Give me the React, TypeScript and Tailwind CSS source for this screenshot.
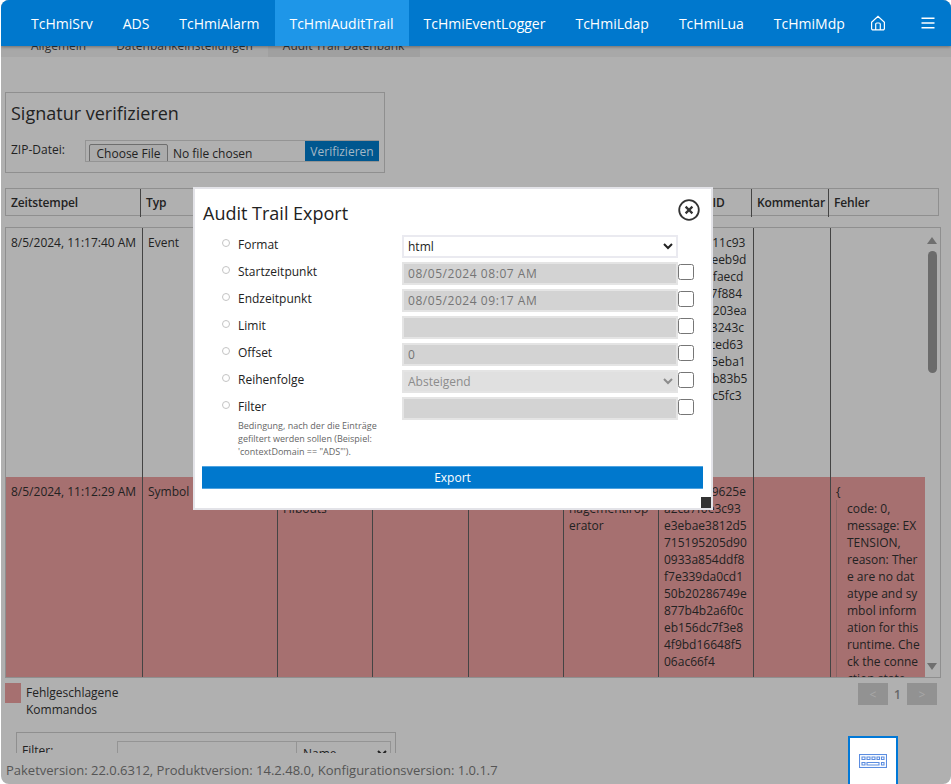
import React from 'react';

const navItems = [
  { label: 'TcHmiSrv' },
  { label: 'ADS' },
  { label: 'TcHmiAlarm' },
  { label: 'TcHmiAuditTrail', active: true },
  { label: 'TcHmiEventLogger' },
  { label: 'TcHmiLdap' },
  { label: 'TcHmiLua' },
  { label: 'TcHmiMdp' },
];

const headerCols = ['Zeitstempel', 'Typ', 'Domäne', 'Name', 'Wert', 'Benutzer', 'Signatur ID', 'Kommentar', 'Fehler'];

const firstRowHash = [
  'a07e3b211c93',
  'c19d420eeb9d',
  '5b8e17dfaecd',
  'e44c0a97f884',
  '7d2ab96203ea',
  '90ce6153243c',
  'b1f738aced63',
  '24a6d8c5eba1',
  'd30e74ab83b5',
  '68b1ee2c5fc3',
];

const secondRowHash = [
  '4cd7e2b9625e',
  'a2ca7f0e3c93',
  'e3ebae3812d5',
  '715195205d90',
  '0933a854ddf8',
  'f7e339da0cd1',
  '50b20286749e',
  '877b4b2a6f0c',
  'eb156dc7f3e8',
  '4f9bd16648f5',
  '06ac66f4',
];

const errorLines = [
  'code: 0,',
  'message: EX',
  'TENSION,',
  'reason: Ther',
  'e are no dat',
  'atype and sy',
  'mbol inform',
  'ation for this',
  'runtime. Che',
  'ck the conne',
  'ction state',
];

function Lines({ lines }: { lines: string[] }) {
  return (
    <>
      {lines.map((line) => (
        <div key={line} className="whitespace-nowrap">
          {line}
        </div>
      ))}
    </>
  );
}

function Cell({ children, first }: { children?: React.ReactNode; first?: boolean }) {
  return (
    <div className={`pl-[5px] pt-[6px] overflow-hidden ${first ? '' : 'border-l border-[#444]'}`}>{children}</div>
  );
}

function ExportRow({ label, noCheck, children }: { label: string; noCheck?: boolean; children: React.ReactNode }) {
  return (
    <div className="flex h-[27px]">
      <div className="w-[35px] pl-[19px] pt-[4px] shrink-0">
        <div className="w-[8px] h-[8px] rounded-full border border-[#c4c4c4]" />
      </div>
      <div className="w-[164px] shrink-0 text-[12px] leading-[18px] pt-[1px] text-[#222]">{label}</div>
      <div className="w-[276px] shrink-0">{children}</div>
      {!noCheck && <input type="checkbox" className="w-[16px] h-[16px] mt-[2px]" />}
    </div>
  );
}

const disabledInput =
  'block w-full h-[23px] px-[4px] text-[12px] tracking-[0.55px] bg-[#d3d3d3] border-2 border-[#e4e4e4] text-[#757575]';

function ExportModal() {
  return (
    <div className="absolute left-[193px] top-[187px] w-[520px] h-[323px] bg-white border-2 border-[#e3e3e8] z-20">
      <div className="pl-[8px] pr-[8px] pt-[12px]">
        <div className="flex justify-between items-start h-[34px]">
          <h2 className="text-[18px] leading-[25px] text-[#222]">Audit Trail Export</h2>
          <svg width="22" height="22" viewBox="0 0 22 22" className="mt-[-2px] mr-[3px]" fill="none">
            <circle cx="11" cy="11" r="9.8" stroke="#333" strokeWidth="1.8" />
            <path d="M7.6 7.6l6.8 6.8M14.4 7.6l-6.8 6.8" stroke="#333" strokeWidth="2.2" />
          </svg>
        </div>
        <ExportRow label="Format" noCheck>
          <select className="block w-full h-[23px] text-[12px] bg-white border-2 border-[#eaeaf0] text-[#222]">
            <option>html</option>
          </select>
        </ExportRow>
        <ExportRow label="Startzeitpunkt">
          <input disabled defaultValue="08/05/2024 08:07 AM" className={disabledInput} />
        </ExportRow>
        <ExportRow label="Endzeitpunkt">
          <input disabled defaultValue="08/05/2024 09:17 AM" className={disabledInput} />
        </ExportRow>
        <ExportRow label="Limit">
          <input disabled className={disabledInput} />
        </ExportRow>
        <ExportRow label="Offset">
          <input disabled defaultValue="0" className={disabledInput} />
        </ExportRow>
        <ExportRow label="Reihenfolge">
          <select
            disabled
            className="block w-full h-[23px] text-[12px] bg-[#e0e0e0] border-2 border-[#e4e4e4] text-[#8c8c8c] opacity-100"
          >
            <option>Absteigend</option>
          </select>
        </ExportRow>
        <ExportRow label="Filter">
          <input disabled className={disabledInput} />
        </ExportRow>
        <p className="ml-[35px] mt-[-5px] w-[150px] text-[9px] leading-[13px] text-[#666]">
          Bedingung, nach der die Einträge gefiltert werden sollen (Beispiel: 'contextDomain == "ADS"').
        </p>
        <button className="block mt-[8px] ml-[-1px] w-[501px] h-[23px] pt-[1px] bg-[#0078cd] border-y border-[#4fa3e0] text-white text-[12px] text-center">
          Export
        </button>
      </div>
      <div className="absolute right-0 bottom-0 w-[10px] h-[11px] bg-[#333]" />
    </div>
  );
}

export default function App() {
  return (
    <div className="relative w-[951px] h-[784px] overflow-hidden bg-white font-['Open_Sans',sans-serif]">
      <div className="flex flex-col h-full ml-[1px] rounded-[8px] overflow-hidden bg-[#b0b0b0] text-[#222]">
        <header className="relative z-10 h-[46px] shrink-0 flex items-stretch bg-[#0078cd] pl-[15px] shadow-[0_1px_3px_rgba(0,0,0,0.35)] text-white text-[14px]">
          {navItems.map((item) => (
            <div
              key={item.label}
              className={`flex items-center ${item.active ? 'ml-[1px] mr-[-1px] pl-[14px] pr-[16px] bg-[#1e96e8]' : 'px-[15px]'}`}
            >
              {item.label}
            </div>
          ))}
          <div className="flex items-center pl-[10px]">
            <svg width="16" height="16" viewBox="0 0 16 16" fill="none" stroke="white" strokeWidth="1.2">
              <path d="M1.6 7.2L8 1.3l6.4 5.9v6.3a1.4 1.4 0 0 1-1.4 1.4H3a1.4 1.4 0 0 1-1.4-1.4z" />
              <path d="M5.7 14.9V9.2a1.2 1.2 0 0 1 1.2-1.2h2.2a1.2 1.2 0 0 1 1.2 1.2v5.7" />
            </svg>
          </div>
          <div className="flex items-center pl-[35px] pb-[1px]">
            <svg width="14" height="12" viewBox="0 0 14 12" stroke="white" strokeWidth="1.4">
              <path d="M0.5 1.2h13M0.5 6h13M0.5 10.8h13" />
            </svg>
          </div>
        </header>

        <div className="mt-[-9px] h-[20px] shrink-0 flex items-end bg-[#a8a8a8] text-[12px] text-[#333]">
          <div className="ml-[30px] pb-[2px]">Allgemein</div>
          <div className="ml-[30px] pb-[2px]">Datenbankeinstellungen</div>
          <div className="ml-[15px] pl-[15px] pr-[16px] pb-[2px] bg-[#a0a0a0]">Audit Trail Datenbank</div>
        </div>

        <main className="flex-1 min-h-0 overflow-hidden pl-[4px] pr-[10px] text-[12px]">
          <section className="mt-[35px] w-[380px] h-[81px] border border-[#8f8f8f] pl-[5px]">
            <h1 className="mt-[8px] text-[18px] leading-[25px] text-[#222]">Signatur verifizieren</h1>
            <div className="flex mt-[14px]">
              <div className="w-[74px] text-[12px] leading-[17px] pt-[1px]">ZIP-Datei:</div>
              <div className="flex w-[294px] h-[22px] border border-[#949494] border-r-0 pl-[3px] pt-[3px] overflow-hidden">
                <div className="shrink-0 w-[79px] h-[20px] border border-[#6e6e6e] rounded-t-[2px] bg-[#ababab] text-[12px] leading-[18px] text-center whitespace-nowrap text-[#222]">
                  Choose File
                </div>
                <div className="shrink-0 ml-[5px] text-[12px] leading-[20px] w-[132px] whitespace-nowrap">No file chosen</div>
                <div className="shrink-0 mt-[-4px] w-[74px] h-[22px] bg-[#00578f] text-[#a4b8c6] text-[12px] leading-[24px] text-center">
                  Verifizieren
                </div>
              </div>
            </div>
          </section>

          <div className="mt-[15px] w-[934px] h-[28px] border border-[#8f8f8f] grid grid-cols-[134px_135px_95px_96px_95px_95px_95px_77px_110px] font-semibold tracking-[-0.15px] leading-[28px]">
            {headerCols.map((col, i) => (
              <div key={col} className={`pl-[5px] whitespace-nowrap ${i === 0 ? '' : 'border-l border-[#444]'}`}>
                {col}
              </div>
            ))}
          </div>

          <div className="mt-[11px] relative w-[936px] h-[451px] border border-[#8f8f8f] overflow-hidden leading-[17px]">
            <div className="w-[919px] h-[249px] grid grid-cols-[136px_135px_95px_96px_95px_95px_95px_77px_95px]">
              <Cell first>8/5/2024, 11:17:40 AM</Cell>
              <Cell>Event</Cell>
              <Cell />
              <Cell />
              <Cell />
              <Cell />
              <Cell>
                <Lines lines={firstRowHash} />
              </Cell>
              <Cell />
              <Cell />
            </div>
            <div className="w-[919px] h-[202px] grid grid-cols-[136px_135px_95px_96px_95px_95px_95px_77px_95px] bg-[#a67070]">
              <Cell first>8/5/2024, 11:12:29 AM</Cell>
              <Cell>Symbol</Cell>
              <Cell>
                <Lines lines={['TcHmi', 'Hibouts']} />
              </Cell>
              <Cell />
              <Cell />
              <Cell>
                <Lines lines={['Benutzer', 'nagementirop', 'erator']} />
              </Cell>
              <Cell>
                <Lines lines={secondRowHash} />
              </Cell>
              <Cell />
              <Cell>
                <div>{'{'}</div>
                <div className="pl-[10px] border-l border-[#8b6565]">
                  <Lines lines={errorLines} />
                </div>
              </Cell>
            </div>
            <div className="absolute right-0 top-0 bottom-0 w-[16px] flex flex-col items-center">
              <div className="mt-[9px] w-0 h-0 border-x-[5px] border-x-transparent border-b-[7px] border-b-[#6f6f6f]" />
              <div className="mt-[7px] w-[9px] h-[122px] rounded-[5px] bg-[#6b6b6b]" />
              <div className="mt-auto mb-[7px] w-0 h-0 border-x-[5px] border-x-transparent border-t-[7px] border-t-[#6f6f6f]" />
            </div>
          </div>

          <div className="flex justify-between mt-[5px] h-[49px] pr-[4px]">
            <div className="flex">
              <div className="w-[16px] h-[20px] bg-[#a67070]" />
              <div className="ml-[5px] leading-[17px] pt-[1px]">
                Fehlgeschlagene
                <br />
                Kommandos
              </div>
            </div>
            <div className="flex h-[22px] text-[12px]">
              <div className="w-[30px] bg-[#929292] text-[#a8a8a8] text-center leading-[24px]">&lt;</div>
              <div className="w-[19px] text-center leading-[24px] font-semibold text-[#666]">1</div>
              <div className="w-[30px] bg-[#929292] text-[#a8a8a8] text-center leading-[24px]">&gt;</div>
            </div>
          </div>

          <section className="ml-[11px] w-[380px] h-[60px] border border-[#8f8f8f] pl-[5px] pt-[8px] flex">
            <div className="w-[95px] pt-[1px]">Filter:</div>
            <div className="w-[180px] h-[24px] border border-[#949494]" />
            <select className="w-[94px] h-[24px] pl-[2px] border border-[#949494] border-l-0 text-[12px] text-[#222]">
              <option>Name</option>
            </select>
          </section>
        </main>

        <footer className="h-[31px] shrink-0 pl-[5px] text-[13px] leading-[35px] text-[#555] whitespace-nowrap">
          Paketversion: 22.0.6312, Produktversion: 14.2.48.0, Konfigurationsversion: 1.0.1.7
        </footer>
      </div>

      <ExportModal />

      <div className="absolute left-[848px] top-[736px] w-[50px] h-[48px] pt-[16px] bg-white border-2 border-b-0 border-[#0078d7] flex justify-center z-10">
        <svg width="28" height="14" viewBox="0 0 28 14" fill="none" stroke="#5b8de0" strokeWidth="1.1">
          <rect x="0.5" y="0.5" width="27" height="13" />
          <path d="M3 3h3v2.5H3zM8 3h3v2.5H8zM13 3h3v2.5h-3zM18 3h2.5v2.5H18zM22.5 3H25v2.5h-2.5zM3 8.5h3V11H3zM8 8.5h12V11H8zM22.5 8.5H25V11h-2.5z" />
        </svg>
      </div>
    </div>
  );
}
